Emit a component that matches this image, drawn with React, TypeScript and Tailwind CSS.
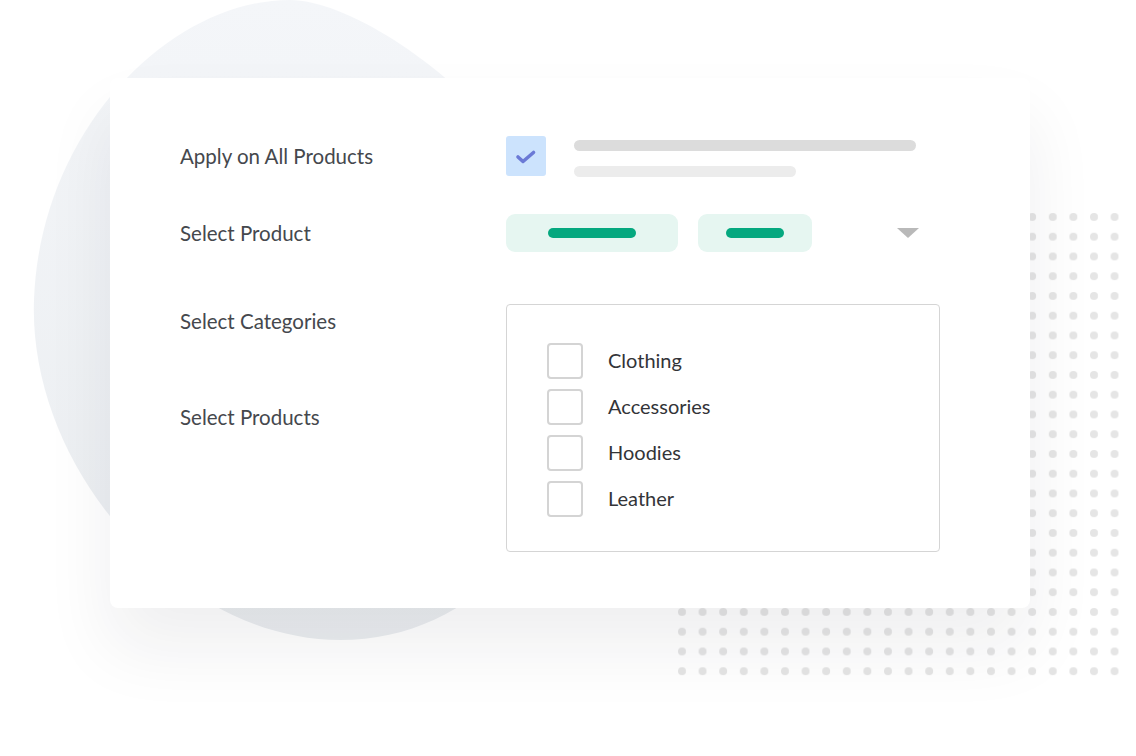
import React from "react";

const categories = ["Clothing", "Accessories", "Hoodies", "Leather"];

function Blob() {
  return (
    <svg
      className="absolute left-0 top-0 pointer-events-none"
      width="1136"
      height="756"
      viewBox="0 0 1136 756"
    >
      <defs>
        <linearGradient id="blobg" x1="0" y1="0" x2="0" y2="1">
          <stop offset="0" stopColor="#f4f6f9" />
          <stop offset="1" stopColor="#eaedf0" />
        </linearGradient>
        <pattern id="dots" x="678" y="213" width="20.6" height="19.75" patternUnits="userSpaceOnUse">
          <circle cx="4" cy="4" r="4" fill="#e5e5e5" />
        </pattern>
      </defs>
      <path
        d="M 290 0 C 170 0, 40 130, 34 300 C 28 470, 180 640, 340 640 C 480 640, 580 520, 590 350 C 600 170, 380 0, 290 0 Z"
        fill="url(#blobg)"
      />
      <rect x="678" y="213" width="442" height="466" fill="url(#dots)" />
    </svg>
  );
}

function CheckIcon() {
  return (
    <svg width="22" height="16" viewBox="0 0 22 16" fill="none">
      <path d="M3 8 L8 12.5 L18.5 3.5" stroke="#6b7ad6" strokeWidth="3.6" strokeLinecap="round" strokeLinejoin="round" />
    </svg>
  );
}

export default function App() {
  return (
    <div
      className="relative w-[1136px] h-[756px] overflow-hidden bg-white"
      style={{ fontFamily: "Lato, 'Noto Sans', sans-serif" }}
    >
      <Blob />
      <div className="relative ml-[110px] mt-[78px] w-[920px] h-[530px] rounded-[8px] bg-white shadow-[0_40px_70px_rgba(30,30,40,0.07)] pl-[70px] pt-[58px]">
        {/* Row 1 */}
        <div className="flex items-center h-[40px]">
          <div className="w-[326px] text-[20.5px] text-[#45484d]">Apply on All Products</div>
          <div className="flex items-center">
            <div className="w-[40px] h-[40px] rounded-[3px] bg-[#cce3fd] flex items-center justify-center pt-[2px]">
              <CheckIcon />
            </div>
            <div className="ml-[28px] mt-[5px] flex flex-col gap-[15px]">
              <div className="w-[342px] h-[11px] rounded-full bg-[#dcdcdc]" />
              <div className="w-[222px] h-[11px] rounded-full bg-[#ececec]" />
            </div>
          </div>
        </div>
        {/* Row 2 */}
        <div className="flex items-center h-[38px] mt-[38px]">
          <div className="w-[326px] text-[20.5px] text-[#45484d]">Select Product</div>
          <div className="flex items-center w-[434px]">
            <div className="w-[172px] h-[38px] rounded-[9px] bg-[#e6f6f1] flex items-center justify-center">
              <div className="w-[88px] h-[10px] rounded-full bg-[#05a87f]" />
            </div>
            <div className="ml-[20px] w-[114px] h-[38px] rounded-[9px] bg-[#e6f6f1] flex items-center justify-center">
              <div className="w-[58px] h-[10px] rounded-full bg-[#05a87f]" />
            </div>
            <div className="ml-auto mr-[21px] w-0 h-0 border-l-[11px] border-r-[11px] border-t-[10px] border-l-transparent border-r-transparent border-t-[#b9b9b9]" />
          </div>
        </div>
        {/* Row 3 */}
        <div className="flex mt-[52px]">
          <div className="w-[326px] pt-[5px] text-[20.5px] text-[#45484d] flex flex-col">
            <div className="leading-[24px]">Select Categories</div>
            <div className="leading-[24px] mt-[72px]">Select Products</div>
          </div>
          <div className="w-[434px] h-[248px] rounded-[4px] border border-[#d5d5d5] pl-[40px] pt-[38px] flex flex-col gap-[10px]">
            {categories.map((c) => (
              <div key={c} className="flex items-center h-[36px]">
                <div className="w-[36px] h-[36px] rounded-[4px] border-2 border-[#d4d4d4] bg-white" />
                <div className="ml-[25px] text-[20px] leading-[24px] mb-[2px] text-[#333438]">{c}</div>
              </div>
            ))}
          </div>
        </div>
      </div>
    </div>
  );
}
